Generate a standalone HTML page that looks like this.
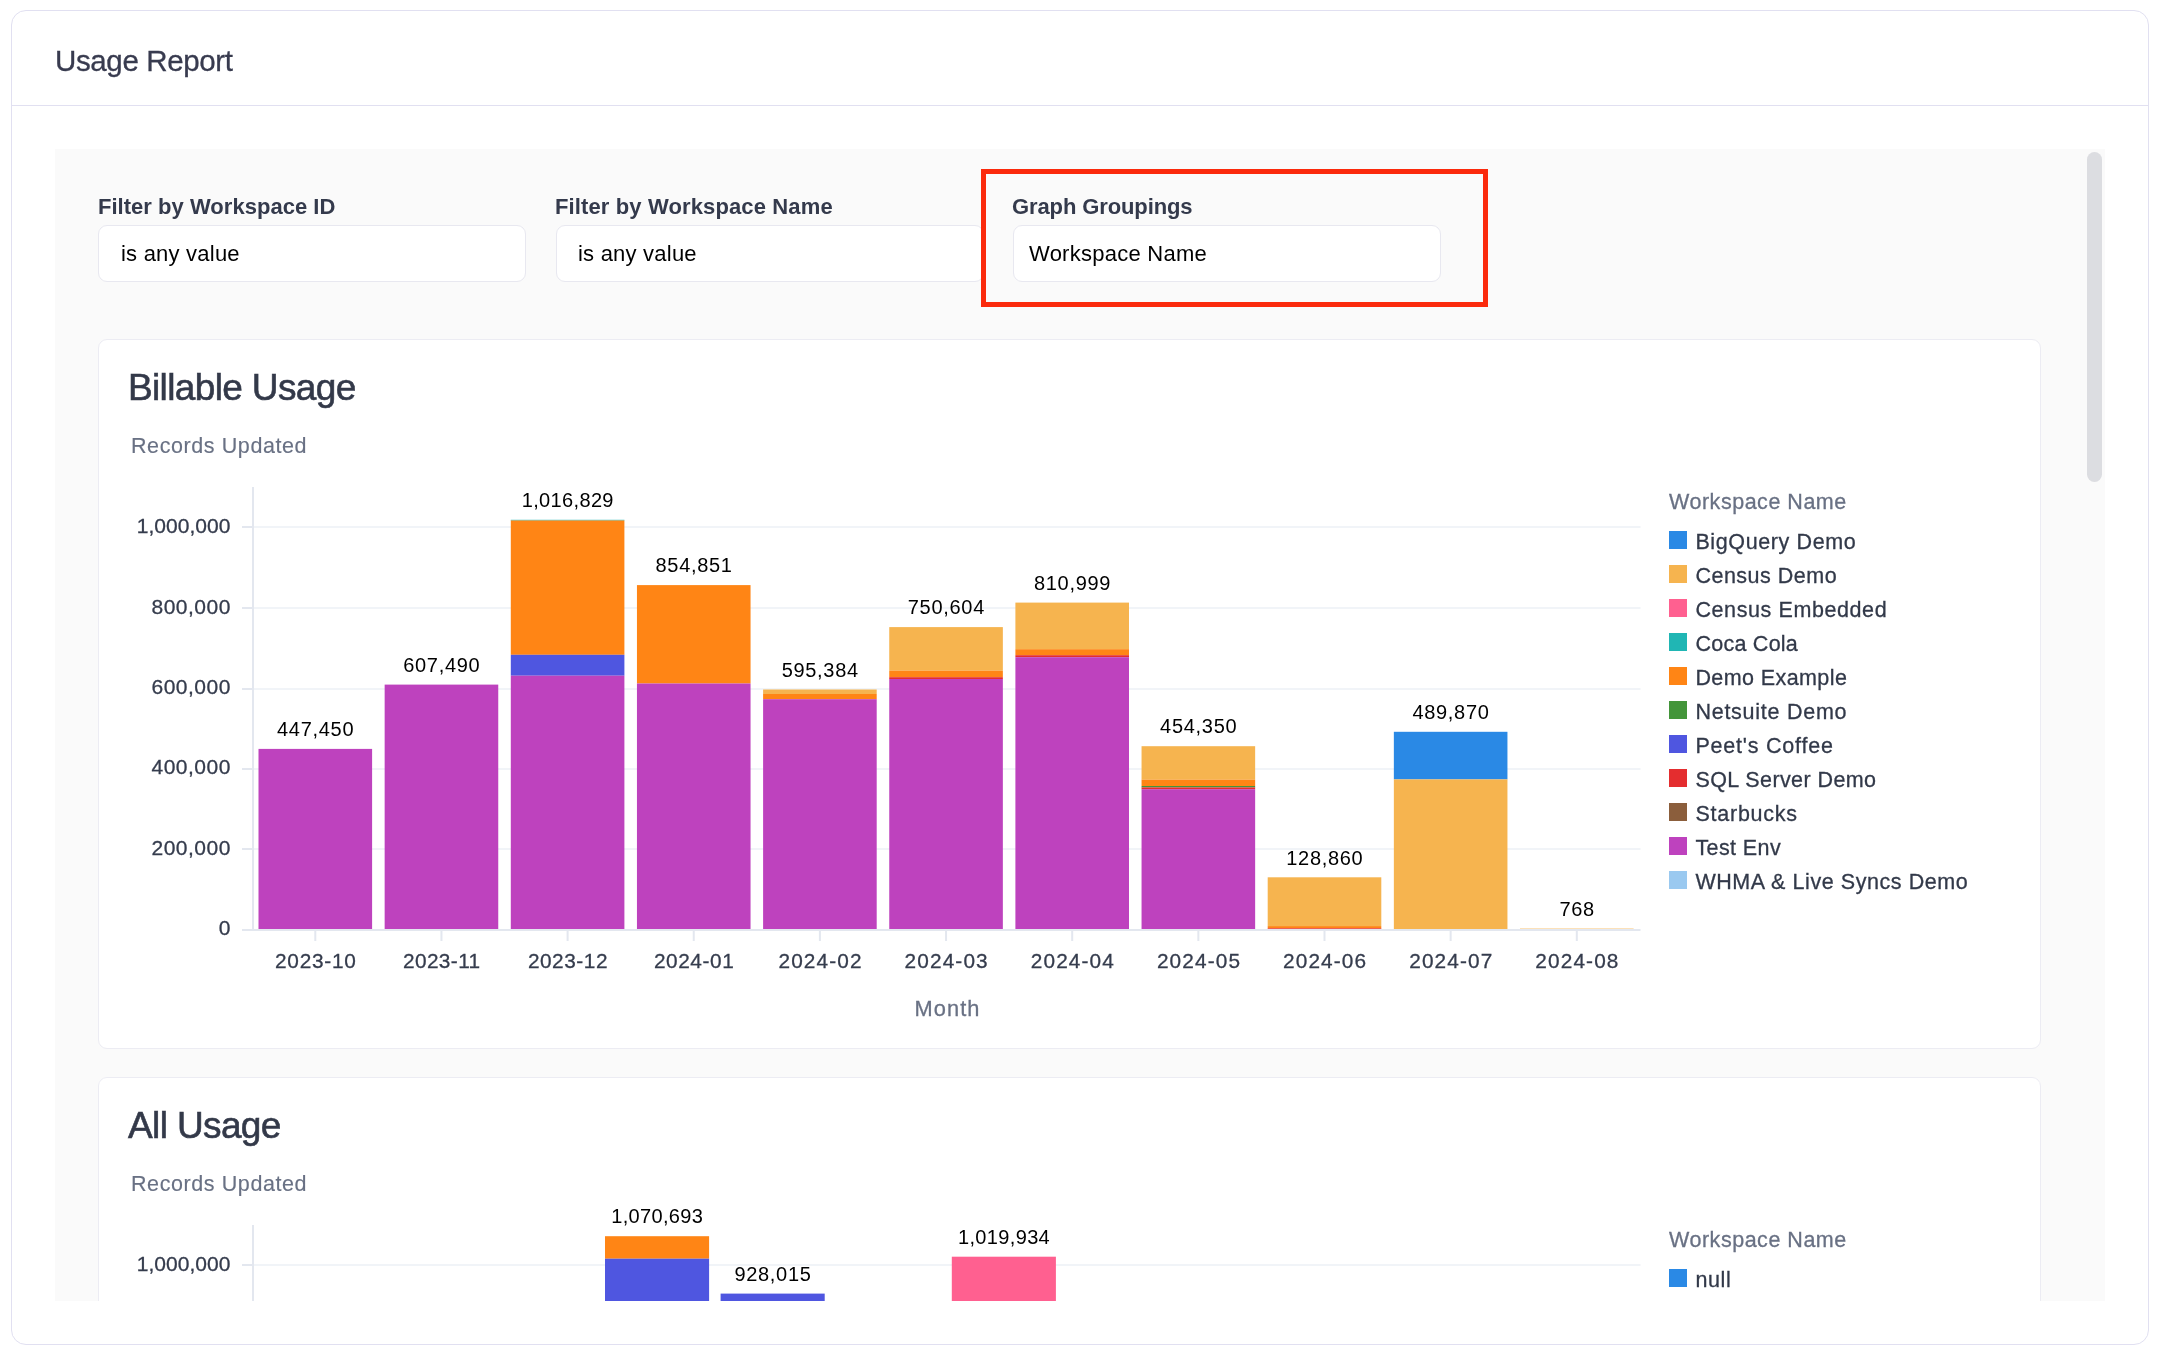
<!DOCTYPE html>
<html lang="en"><head><meta charset="utf-8"><title>Usage Report</title>
<style>
html,body{margin:0;padding:0;background:#fff;}
body{width:2162px;height:1358px;position:relative;overflow:hidden;font-family:"Liberation Sans", sans-serif;}
.t{position:absolute;white-space:nowrap;line-height:1;will-change:transform;}
.frame{position:absolute;left:11px;top:10px;width:2138px;height:1335px;box-sizing:border-box;border:1.5px solid #e1e0f1;border-radius:15px;}
.sep{position:absolute;left:12px;top:104.5px;width:2136px;height:1.5px;background:#e1e0f1;}
.panel{position:absolute;left:55px;top:149px;width:2049.5px;height:1151.5px;background:#fafafa;overflow:hidden;}
.inner{position:absolute;left:-55px;top:-149px;width:2162px;height:1358px;}
.inp{position:absolute;top:225px;height:57px;width:428px;box-sizing:border-box;background:#fff;border:1.5px solid #e8e8f0;border-radius:9px;}
.card{position:absolute;left:98px;width:1943px;height:710px;box-sizing:border-box;background:#fff;border:1.5px solid #ececf3;border-radius:9px;}
.redbox{position:absolute;left:981px;top:169px;width:507px;height:138px;box-sizing:border-box;border:5px solid #fb2a0c;background:#fafafa;}
.thumb{position:absolute;left:2087px;top:152px;width:15px;height:330px;border-radius:8px;background:#dcdde1;}
svg{position:absolute;left:0;top:0;will-change:transform;}
svg text{font-family:"Liberation Sans", sans-serif;}
svg text.i{stroke:currentColor;stroke-width:0.3px;}

</style></head><body>
<div class="frame"></div><div class="sep"></div>
<div class="t " style="left:55.05px;top:45.80px;font-size:29.5px;color:#383b4f;letter-spacing:-0.368px;-webkit-text-stroke:0.3px #383b4f;">Usage Report</div>
<div class="panel"><div class="inner">
<div class="t " style="left:98.45px;top:195.90px;font-size:22px;color:#343a4c;letter-spacing:0.029px;font-weight:700;">Filter by Workspace ID</div>
<div class="t " style="left:554.82px;top:195.90px;font-size:22px;color:#343a4c;letter-spacing:0.128px;font-weight:700;">Filter by Workspace Name</div>
<div class="inp" style="left:98.3px"></div>
<div class="inp" style="left:555.5px"></div>
<div class="t " style="left:120.66px;top:243.10px;font-size:22px;color:#000;letter-spacing:0.218px;">is any value</div>
<div class="t " style="left:577.66px;top:243.10px;font-size:22px;color:#000;letter-spacing:0.218px;">is any value</div>
<div class="redbox"></div>
<div class="t " style="left:1012.24px;top:195.90px;font-size:22px;color:#343a4c;letter-spacing:-0.109px;font-weight:700;">Graph Groupings</div>
<div class="inp" style="left:1013px"></div>
<div class="t " style="left:1029.00px;top:243.10px;font-size:22px;color:#000;letter-spacing:0.259px;">Workspace Name</div>
<div class="card" style="top:339px"></div>
<div class="t h" style="left:128.13px;top:368.85px;font-size:37px;color:#333949;letter-spacing:-0.639px;-webkit-text-stroke:0.6px #333949;">Billable Usage</div>
<div class="t " style="left:131.08px;top:435.50px;font-size:21.5px;color:#697184;letter-spacing:0.587px;-webkit-text-stroke:0.15px #697184;">Records Updated</div>
<svg width="2162" height="1358" viewBox="0 0 2162 1358">
<rect x="242" y="929.00" width="11" height="2" fill="#e3e7ef"/>
<text x="230.90" y="934.80" text-anchor="end" font-size="21" letter-spacing="0.5" class="i" style="color:#353c4d" fill="#353c4d">0</text>
<rect x="254" y="848.00" width="1386.5" height="2" fill="#f1f4f8"/>
<rect x="242" y="848.00" width="11" height="2" fill="#e3e7ef"/>
<text x="230.90" y="854.50" text-anchor="end" font-size="21" letter-spacing="0.5" class="i" style="color:#353c4d" fill="#353c4d">200,000</text>
<rect x="254" y="768.00" width="1386.5" height="2" fill="#f1f4f8"/>
<rect x="242" y="768.00" width="11" height="2" fill="#e3e7ef"/>
<text x="230.90" y="774.20" text-anchor="end" font-size="21" letter-spacing="0.5" class="i" style="color:#353c4d" fill="#353c4d">400,000</text>
<rect x="254" y="688.00" width="1386.5" height="2" fill="#f1f4f8"/>
<rect x="242" y="688.00" width="11" height="2" fill="#e3e7ef"/>
<text x="230.90" y="693.90" text-anchor="end" font-size="21" letter-spacing="0.5" class="i" style="color:#353c4d" fill="#353c4d">600,000</text>
<rect x="254" y="607.00" width="1386.5" height="2" fill="#f1f4f8"/>
<rect x="242" y="607.00" width="11" height="2" fill="#e3e7ef"/>
<text x="230.90" y="613.60" text-anchor="end" font-size="21" letter-spacing="0.5" class="i" style="color:#353c4d" fill="#353c4d">800,000</text>
<rect x="254" y="526.00" width="1386.5" height="2" fill="#f1f4f8"/>
<rect x="242" y="526.00" width="11" height="2" fill="#e3e7ef"/>
<text x="230.43" y="533.30" text-anchor="end" font-size="21" letter-spacing="0.03" class="i" style="color:#353c4d" fill="#353c4d">1,000,000</text>
<rect x="258.50" y="748.90" width="113.60" height="180.10" fill="#BE42BE"/>
<rect x="384.65" y="684.60" width="113.60" height="244.40" fill="#BE42BE"/>
<rect x="510.80" y="519.80" width="113.60" height="0.80" fill="#20B6B4"/>
<rect x="510.80" y="520.50" width="113.60" height="134.30" fill="#FF8515"/>
<rect x="510.80" y="654.80" width="113.60" height="20.90" fill="#4F56E0"/>
<rect x="510.80" y="675.70" width="113.60" height="253.30" fill="#BE42BE"/>
<rect x="636.95" y="585.10" width="113.60" height="98.40" fill="#FF8515"/>
<rect x="636.95" y="683.50" width="113.60" height="245.50" fill="#BE42BE"/>
<rect x="763.10" y="689.50" width="113.60" height="4.50" fill="#F6B44F"/>
<rect x="763.10" y="694.00" width="113.60" height="5.20" fill="#FF8515"/>
<rect x="763.10" y="699.20" width="113.60" height="229.80" fill="#BE42BE"/>
<rect x="889.25" y="627.10" width="113.60" height="43.60" fill="#F6B44F"/>
<rect x="889.25" y="670.70" width="113.60" height="6.50" fill="#FF8515"/>
<rect x="889.25" y="677.20" width="113.60" height="1.80" fill="#E42D2F"/>
<rect x="889.25" y="679.00" width="113.60" height="250.00" fill="#BE42BE"/>
<rect x="1015.40" y="602.60" width="113.60" height="46.60" fill="#F6B44F"/>
<rect x="1015.40" y="649.20" width="113.60" height="6.00" fill="#FF8515"/>
<rect x="1015.40" y="655.20" width="113.60" height="2.00" fill="#E42D2F"/>
<rect x="1015.40" y="657.20" width="113.60" height="271.80" fill="#BE42BE"/>
<rect x="1141.55" y="746.20" width="113.60" height="33.50" fill="#F6B44F"/>
<rect x="1141.55" y="779.70" width="113.60" height="6.30" fill="#FF8515"/>
<rect x="1141.55" y="786.00" width="113.60" height="1.40" fill="#43953A"/>
<rect x="1141.55" y="787.40" width="113.60" height="1.80" fill="#E42D2F"/>
<rect x="1141.55" y="789.20" width="113.60" height="139.80" fill="#BE42BE"/>
<rect x="1267.70" y="877.30" width="113.60" height="48.80" fill="#F6B44F"/>
<rect x="1267.70" y="926.10" width="113.60" height="2.20" fill="#FF8515"/>
<rect x="1267.70" y="928.30" width="113.60" height="0.70" fill="#E42D2F"/>
<rect x="1393.85" y="731.80" width="113.60" height="47.60" fill="#2A89E5"/>
<rect x="1393.85" y="779.40" width="113.60" height="149.60" fill="#F6B44F"/>
<rect x="1520.00" y="928.60" width="113.60" height="0.40" fill="#F6B44F"/>
<rect x="252" y="487" width="2" height="444" fill="#e3e7ef"/>
<rect x="252" y="929" width="1388.5" height="2" fill="#e3e7ef"/>
<rect x="314.30" y="931" width="2" height="10" fill="#e3e7ef"/>
<text x="315.77" y="968.20" text-anchor="middle" font-size="20.8" letter-spacing="0.73" class="i" style="color:#353c4d" fill="#353c4d">2023-10</text>
<rect x="440.45" y="931" width="2" height="10" fill="#e3e7ef"/>
<text x="441.75" y="968.20" text-anchor="middle" font-size="20.8" letter-spacing="0.4" class="i" style="color:#353c4d" fill="#353c4d">2023-11</text>
<rect x="566.60" y="931" width="2" height="10" fill="#e3e7ef"/>
<text x="567.98" y="968.20" text-anchor="middle" font-size="20.8" letter-spacing="0.55" class="i" style="color:#353c4d" fill="#353c4d">2023-12</text>
<rect x="692.75" y="931" width="2" height="10" fill="#e3e7ef"/>
<text x="694.15" y="968.20" text-anchor="middle" font-size="20.8" letter-spacing="0.6" class="i" style="color:#353c4d" fill="#353c4d">2024-01</text>
<rect x="818.90" y="931" width="2" height="10" fill="#e3e7ef"/>
<text x="820.56" y="968.20" text-anchor="middle" font-size="20.8" letter-spacing="1.12" class="i" style="color:#353c4d" fill="#353c4d">2024-02</text>
<rect x="945.05" y="931" width="2" height="10" fill="#e3e7ef"/>
<text x="946.71" y="968.20" text-anchor="middle" font-size="20.8" letter-spacing="1.12" class="i" style="color:#353c4d" fill="#353c4d">2024-03</text>
<rect x="1071.20" y="931" width="2" height="10" fill="#e3e7ef"/>
<text x="1072.86" y="968.20" text-anchor="middle" font-size="20.8" letter-spacing="1.12" class="i" style="color:#353c4d" fill="#353c4d">2024-04</text>
<rect x="1197.35" y="931" width="2" height="10" fill="#e3e7ef"/>
<text x="1199.01" y="968.20" text-anchor="middle" font-size="20.8" letter-spacing="1.12" class="i" style="color:#353c4d" fill="#353c4d">2024-05</text>
<rect x="1323.50" y="931" width="2" height="10" fill="#e3e7ef"/>
<text x="1325.16" y="968.20" text-anchor="middle" font-size="20.8" letter-spacing="1.12" class="i" style="color:#353c4d" fill="#353c4d">2024-06</text>
<rect x="1449.65" y="931" width="2" height="10" fill="#e3e7ef"/>
<text x="1451.31" y="968.20" text-anchor="middle" font-size="20.8" letter-spacing="1.12" class="i" style="color:#353c4d" fill="#353c4d">2024-07</text>
<rect x="1575.80" y="931" width="2" height="10" fill="#e3e7ef"/>
<text x="1577.46" y="968.20" text-anchor="middle" font-size="20.8" letter-spacing="1.12" class="i" style="color:#353c4d" fill="#353c4d">2024-08</text>
<text x="315.65" y="736.10" text-anchor="middle" font-size="20" letter-spacing="0.7" fill="#000">447,450</text>
<text x="441.80" y="671.80" text-anchor="middle" font-size="20" letter-spacing="0.7" fill="#000">607,490</text>
<text x="567.77" y="507.30" text-anchor="middle" font-size="20" letter-spacing="0.35" fill="#000">1,016,829</text>
<text x="694.10" y="572.30" text-anchor="middle" font-size="20" letter-spacing="0.7" fill="#000">854,851</text>
<text x="820.25" y="676.70" text-anchor="middle" font-size="20" letter-spacing="0.7" fill="#000">595,384</text>
<text x="946.40" y="614.30" text-anchor="middle" font-size="20" letter-spacing="0.7" fill="#000">750,604</text>
<text x="1072.55" y="589.80" text-anchor="middle" font-size="20" letter-spacing="0.7" fill="#000">810,999</text>
<text x="1198.70" y="733.40" text-anchor="middle" font-size="20" letter-spacing="0.7" fill="#000">454,350</text>
<text x="1324.85" y="864.50" text-anchor="middle" font-size="20" letter-spacing="0.7" fill="#000">128,860</text>
<text x="1451.00" y="719.00" text-anchor="middle" font-size="20" letter-spacing="0.7" fill="#000">489,870</text>
<text x="1577.15" y="915.70" text-anchor="middle" font-size="20" letter-spacing="0.7" fill="#000">768</text>
<text x="947.5" y="1016.30" text-anchor="middle" font-size="21.8" letter-spacing="1.05" class="i" style="color:#697184" fill="#697184">Month</text>
<text x="1669.04" y="508.70" font-size="21.5" letter-spacing="0.52" class="i" style="color:#697184" fill="#697184">Workspace Name</text>
<rect x="1669" y="531.00" width="18" height="18" fill="#2A89E5"/>
<text x="1695.43" y="548.50" font-size="21.5" letter-spacing="0.612" class="i" style="color:#323949" fill="#323949">BigQuery Demo</text>
<rect x="1669" y="565.00" width="18" height="18" fill="#F6B44F"/>
<text x="1695.43" y="582.50" font-size="21.5" letter-spacing="0.495" class="i" style="color:#323949" fill="#323949">Census Demo</text>
<rect x="1669" y="599.00" width="18" height="18" fill="#FF6090"/>
<text x="1695.43" y="616.50" font-size="21.5" letter-spacing="0.594" class="i" style="color:#323949" fill="#323949">Census Embedded</text>
<rect x="1669" y="633.00" width="18" height="18" fill="#20B6B4"/>
<text x="1695.43" y="650.50" font-size="21.5" letter-spacing="0.252" class="i" style="color:#323949" fill="#323949">Coca Cola</text>
<rect x="1669" y="667.00" width="18" height="18" fill="#FF8515"/>
<text x="1695.43" y="684.50" font-size="21.5" letter-spacing="0.407" class="i" style="color:#323949" fill="#323949">Demo Example</text>
<rect x="1669" y="701.00" width="18" height="18" fill="#43953A"/>
<text x="1695.43" y="718.50" font-size="21.5" letter-spacing="0.747" class="i" style="color:#323949" fill="#323949">Netsuite Demo</text>
<rect x="1669" y="735.00" width="18" height="18" fill="#4F56E0"/>
<text x="1695.43" y="752.50" font-size="21.5" letter-spacing="0.792" class="i" style="color:#323949" fill="#323949">Peet's Coffee</text>
<rect x="1669" y="769.00" width="18" height="18" fill="#E42D2F"/>
<text x="1695.43" y="786.50" font-size="21.5" letter-spacing="0.412" class="i" style="color:#323949" fill="#323949">SQL Server Demo</text>
<rect x="1669" y="803.00" width="18" height="18" fill="#8B5E3C"/>
<text x="1695.43" y="820.50" font-size="21.5" letter-spacing="0.758" class="i" style="color:#323949" fill="#323949">Starbucks</text>
<rect x="1669" y="837.00" width="18" height="18" fill="#BE42BE"/>
<text x="1695.43" y="854.50" font-size="21.5" letter-spacing="0.406" class="i" style="color:#323949" fill="#323949">Test Env</text>
<rect x="1669" y="871.00" width="18" height="18" fill="#9AC9F0"/>
<text x="1695.43" y="888.50" font-size="21.5" letter-spacing="0.565" class="i" style="color:#323949" fill="#323949">WHMA &amp; Live Syncs Demo</text>
</svg>
<div class="card" style="top:1077px"></div>
<div class="t h" style="left:128.24px;top:1107.00px;font-size:37px;color:#333949;letter-spacing:-0.62px;-webkit-text-stroke:0.6px #333949;">All Usage</div>
<div class="t " style="left:131.08px;top:1173.50px;font-size:21.5px;color:#697184;letter-spacing:0.587px;-webkit-text-stroke:0.15px #697184;">Records Updated</div>
<svg width="2162" height="1358" viewBox="0 0 2162 1358">
<rect x="242" y="1667.00" width="11" height="2" fill="#e3e7ef"/>
<text x="230.90" y="1672.80" text-anchor="end" font-size="21" letter-spacing="0.5" class="i" style="color:#353c4d" fill="#353c4d">0</text>
<rect x="254" y="1586.00" width="1386.5" height="2" fill="#f1f4f8"/>
<rect x="242" y="1586.00" width="11" height="2" fill="#e3e7ef"/>
<text x="230.90" y="1592.50" text-anchor="end" font-size="21" letter-spacing="0.5" class="i" style="color:#353c4d" fill="#353c4d">200,000</text>
<rect x="254" y="1506.00" width="1386.5" height="2" fill="#f1f4f8"/>
<rect x="242" y="1506.00" width="11" height="2" fill="#e3e7ef"/>
<text x="230.90" y="1512.20" text-anchor="end" font-size="21" letter-spacing="0.5" class="i" style="color:#353c4d" fill="#353c4d">400,000</text>
<rect x="254" y="1426.00" width="1386.5" height="2" fill="#f1f4f8"/>
<rect x="242" y="1426.00" width="11" height="2" fill="#e3e7ef"/>
<text x="230.90" y="1431.90" text-anchor="end" font-size="21" letter-spacing="0.5" class="i" style="color:#353c4d" fill="#353c4d">600,000</text>
<rect x="254" y="1345.00" width="1386.5" height="2" fill="#f1f4f8"/>
<rect x="242" y="1345.00" width="11" height="2" fill="#e3e7ef"/>
<text x="230.90" y="1351.60" text-anchor="end" font-size="21" letter-spacing="0.5" class="i" style="color:#353c4d" fill="#353c4d">800,000</text>
<rect x="254" y="1264.00" width="1386.5" height="2" fill="#f1f4f8"/>
<rect x="242" y="1264.00" width="11" height="2" fill="#e3e7ef"/>
<text x="230.43" y="1271.30" text-anchor="end" font-size="21" letter-spacing="0.03" class="i" style="color:#353c4d" fill="#353c4d">1,000,000</text>
<rect x="605.00" y="1236.20" width="104.10" height="22.50" fill="#FF8515"/>
<rect x="605.00" y="1258.70" width="104.10" height="408.30" fill="#4F56E0"/>
<rect x="720.60" y="1293.60" width="104.10" height="373.40" fill="#4F56E0"/>
<rect x="951.80" y="1256.70" width="104.10" height="410.30" fill="#FF6090"/>
<rect x="252" y="1225" width="2" height="444" fill="#e3e7ef"/>
<rect x="252" y="1667" width="1388.5" height="2" fill="#e3e7ef"/>
<text x="657.22" y="1223.40" text-anchor="middle" font-size="20" letter-spacing="0.35" fill="#000">1,070,693</text>
<text x="773.00" y="1280.80" text-anchor="middle" font-size="20" letter-spacing="0.7" fill="#000">928,015</text>
<text x="1004.02" y="1243.90" text-anchor="middle" font-size="20" letter-spacing="0.35" fill="#000">1,019,934</text>
<text x="947.5" y="1754.30" text-anchor="middle" font-size="21.8" letter-spacing="1.05" class="i" style="color:#697184" fill="#697184">Month</text>
<text x="1669.04" y="1246.70" font-size="21.5" letter-spacing="0.52" class="i" style="color:#697184" fill="#697184">Workspace Name</text>
<rect x="1669" y="1269.00" width="18" height="18" fill="#2A89E5"/>
<text x="1695.43" y="1286.50" font-size="21.5" letter-spacing="0.612" class="i" style="color:#323949" fill="#323949">null</text>
</svg>
<div class="thumb"></div>
</div></div>
</body></html>
